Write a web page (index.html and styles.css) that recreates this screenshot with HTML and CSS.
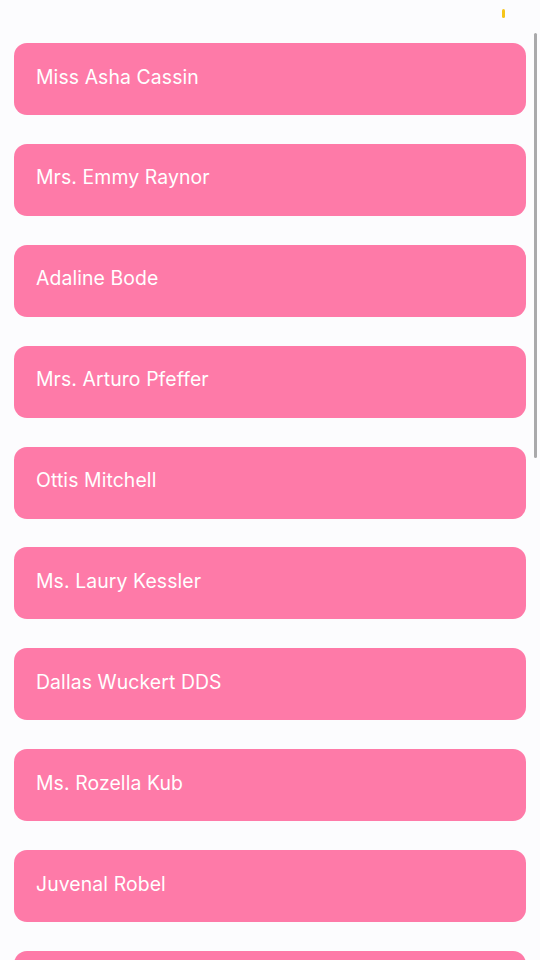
FILE: index.html
```html
<!DOCTYPE html>
<html>
<head>
<meta charset="utf-8">
<link rel="stylesheet" href="styles.css">
</head>
<body>
<div class="screen">
  <span class="dot"></span>
  <span class="scrollbar"></span>
  <ul class="list">
    <li class="card">Miss Asha Cassin</li>
    <li class="card">Mrs. Emmy Raynor</li>
    <li class="card">Adaline Bode</li>
    <li class="card">Mrs. Arturo Pfeffer</li>
    <li class="card">Ottis Mitchell</li>
    <li class="card">Ms. Laury Kessler</li>
    <li class="card">Dallas Wuckert DDS</li>
    <li class="card">Ms. Rozella Kub</li>
    <li class="card">Juvenal Robel</li>
    <li class="card"></li>
  </ul>
</div>
</body>
</html>
```
FILE: styles.css
```css
html, body {
  margin: 0;
  padding: 0;
  height: 100%;
  overflow: hidden;
  background: #fcfcfe;
}
.screen {
  position: relative;
  width: 540px;
  height: 960px;
  overflow: hidden;
  font-family: Inter, "Noto Sans", sans-serif;
}
.list {
  list-style: none;
  margin: 0;
  padding: 43px 14px 0 14px;
  display: flex;
  flex-direction: column;
  gap: 28.9px;
}
.card {
  height: 72px;
  flex: 0 0 72px;
  box-sizing: border-box;
  background: #fe7aa8;
  border-radius: 13px;
  padding: 0 22px 5px 22px;
  display: flex;
  align-items: center;
  color: #ffffff;
  font-size: 19.4px;
  letter-spacing: 0.1px;
}
.dot {
  position: absolute;
  left: 502px;
  top: 9px;
  width: 3px;
  height: 9px;
  border-radius: 2px;
  background: #f6c51a;
}
.scrollbar {
  position: absolute;
  left: 534px;
  top: 33px;
  width: 3px;
  height: 425px;
  border-radius: 2px;
  background: #a9a9ab;
}
```
